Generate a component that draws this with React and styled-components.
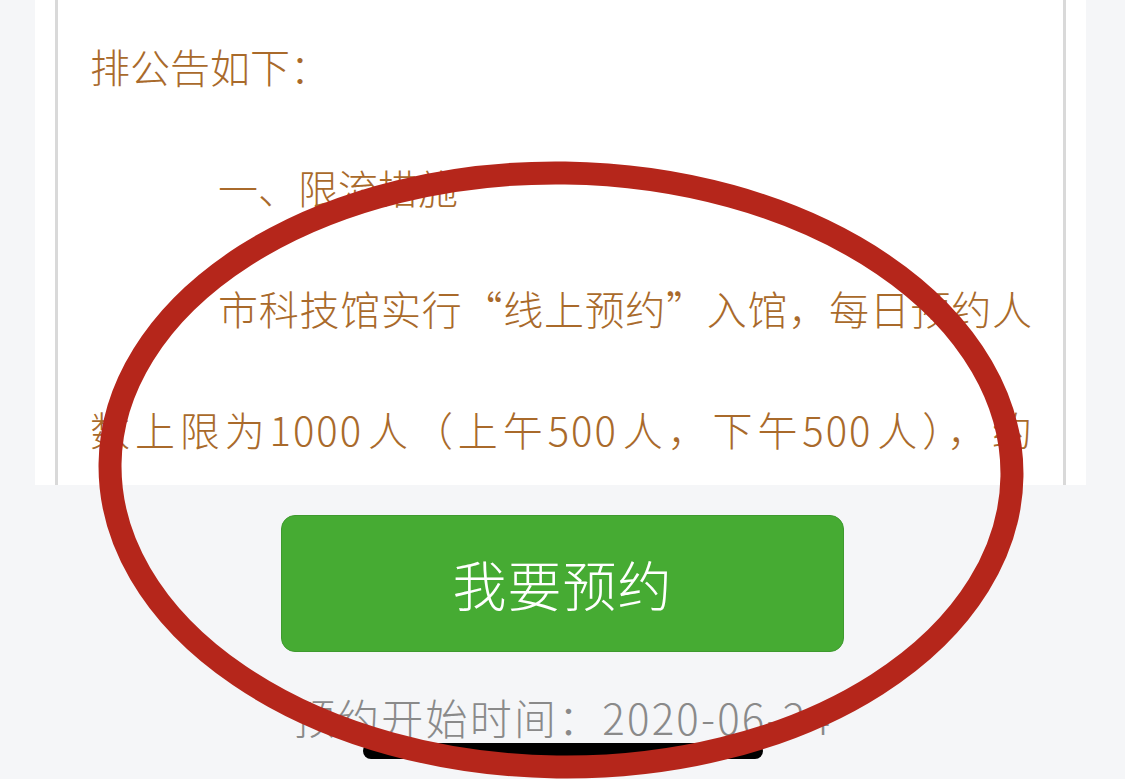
import React from 'react';
import styled, { createGlobalStyle } from 'styled-components';

const GlobalStyle = createGlobalStyle`
  html, body {
    margin: 0;
    padding: 0;
    background: #f5f6f8;
  }
  body {
    font-family: "Noto Sans CJK SC", "Noto Sans", sans-serif;
  }
`;

const Screen = styled.div`
  position: relative;
  width: 1125px;
  height: 779px;
  overflow: hidden;
  background: #f5f6f8;
  display: flex;
  flex-direction: column;
  align-items: center;
`;

const ArticlePanel = styled.div`
  align-self: stretch;
  margin: 0 39px 0 35px;
  height: 485px;
  background: #ffffff;
  padding: 0 20px;
  overflow: hidden;
`;

const ArticleBody = styled.div`
  height: 100%;
  border-left: 3px solid #d9d9d9;
  border-right: 3px solid #d9d9d9;
  padding: 6px 31px 0 32px;
  box-sizing: border-box;
`;

const Line = styled.p`
  margin: 0;
  font-size: 40px;
  font-weight: 300;
  line-height: 121px;
  color: #a96a2b;
  white-space: nowrap;
  padding-left: ${(p) => (p.$indent ? '128px' : '0')};
  text-align: justify;
  text-align-last: ${(p) => (p.$justify ? 'justify' : 'start')};
`;

const Num = styled.span`
  letter-spacing: 2px;
`;

const BookButton = styled.button`
  margin-top: 30px;
  width: 563px;
  height: 137px;
  border: 1px solid #3e9a2e;
  border-radius: 14px;
  background: #46ab33;
  color: #ffffff;
  font-family: "Noto Sans CJK SC", sans-serif;
  font-size: 54px;
  font-weight: 300;
  letter-spacing: 1px;
  display: flex;
  align-items: center;
  justify-content: center;
  cursor: pointer;
`;

const StartTime = styled.div`
  margin-top: 35px;
  font-size: 42px;
  font-weight: 300;
  line-height: 60px;
  letter-spacing: 2.2px;
  color: #8a8a8a;
`;

const HomeIndicator = styled.div`
  position: absolute;
  top: 743px;
  left: 50%;
  transform: translateX(-50%);
  width: 400px;
  height: 16px;
  border-radius: 8px;
  background: #000000;
`;

const Annotation = styled.svg`
  position: absolute;
  inset: 0;
  width: 1125px;
  height: 779px;
  pointer-events: none;
`;

export default function App() {
  return (
    <>
      <GlobalStyle />
      <Screen>
        <ArticlePanel>
          <ArticleBody>
            <Line>排公告如下：</Line>
            <Line $indent>一、限流措施</Line>
            <Line $indent $justify>市科技馆实行“线上预约”入馆，每日预约人</Line>
            <Line $justify>
              数上限为<Num>1000</Num>人（上午<Num>500</Num>人，下午<Num>500</Num>人），约
            </Line>
          </ArticleBody>
        </ArticlePanel>
        <BookButton type="button">我要预约</BookButton>
        <StartTime>预约开始时间：2020-06-24</StartTime>
        <HomeIndicator />
        <Annotation viewBox="0 0 1125 779">
          <ellipse
            cx="561"
            cy="470"
            rx="451"
            ry="297"
            fill="none"
            stroke="#b5261b"
            strokeWidth="23"
            transform="rotate(0.8 561 470)"
          />
        </Annotation>
      </Screen>
    </>
  );
}
